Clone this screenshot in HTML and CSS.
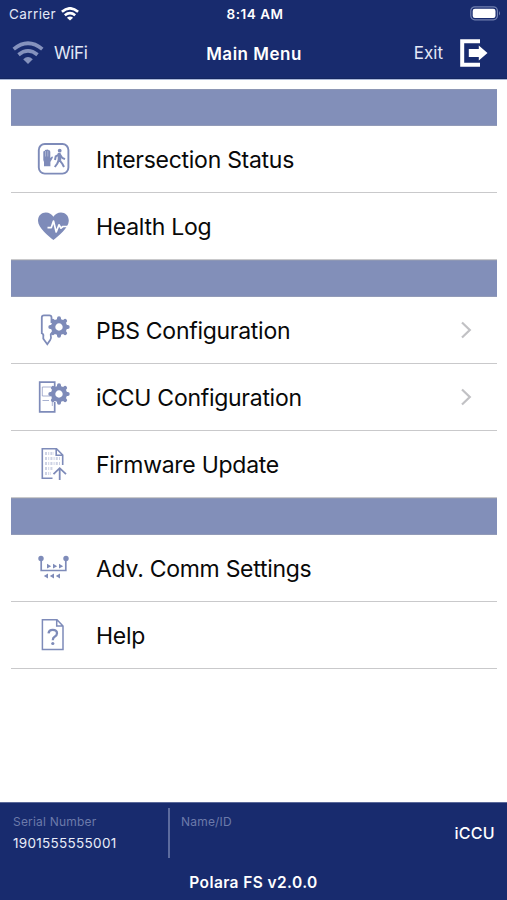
FILE: index.html
```html
<!DOCTYPE html>
<html lang="en">
<head>
<meta charset="utf-8">
<title>Main Menu</title>
<link rel="stylesheet" href="styles.css">
</head>
<body>
<svg class="defs" width="0" height="0">
  <symbol id="gear" viewBox="-11 -11 22 22">
    <circle r="5.9" fill="none" stroke="currentColor" stroke-width="4.4"/>
    <g stroke="currentColor" stroke-width="4" stroke-linecap="round">
      <path d="M0-7.5V-8.7M0 7.5V8.7M-7.5 0H-8.7M7.5 0H8.7M-5.3-5.3L-6.1-6.1M5.3-5.3L6.1-6.1M-5.3 5.3L-6.1 6.1M5.3 5.3L6.1 6.1"/>
    </g>
  </symbol>
</svg>
<div class="app">
  <header class="header">
    <div class="status">
      <div class="carrier"><span>Carrier</span>
        <svg width="18" height="14" viewBox="0 0 18 14" fill="none" stroke="#fff" stroke-width="2.6"><path d="M.9 4.8Q9-2.2 17.1 4.8M3.8 8.3Q9 4 14.2 8.3"/><path d="M9 13.6L5.9 10.7Q9 8.5 12.1 10.7Z" fill="#fff" stroke="none"/></svg>
      </div>
      <div class="time">8:14 AM</div>
      <svg class="battery" width="31" height="15" viewBox="0 0 31 15"><rect x=".8" y=".8" width="26.6" height="13" rx="4" fill="none" stroke="#7180b0" stroke-width="1.2"/><rect x="2.7" y="2.7" width="22.8" height="9.2" rx="2.2" fill="#fff"/><path d="M29 5Q31 7.3 29 9.6Z" fill="#7180b0"/></svg>
    </div>
    <nav class="nav">
      <div class="wifi">
        <svg width="32" height="24" viewBox="0 0 32 24" fill="none" stroke="#8592bd" stroke-width="3.7"><path d="M1.7 8.2Q16-3.7 30.3 8.2M6.5 13.7Q16 6 25.5 13.7"/><path d="M16 23L11.2 18.2Q16 14 20.8 18.2Z" fill="#8592bd" stroke="none"/></svg>
        <span>WiFi</span>
      </div>
      <h1 class="title">Main Menu</h1>
      <div class="exit"><span>Exit</span>
        <svg width="28" height="28" viewBox="0 0 28 28"><path d="M20 2.2H2.2V25.8H20" fill="none" stroke="#fff" stroke-width="4"/><path d="M8.8 10H18.8V6.5L27.5 14 18.8 21.5V18H8.8Z" fill="#fff"/></svg>
      </div>
    </nav>
  </header>
  <main class="menu">
    <div class="band"></div>
    <div class="row">
      <svg class="icon" viewBox="0 0 36 36"><rect x="3.8" y="3" width="29.6" height="29.6" rx="6" fill="none" stroke="currentColor" stroke-width="1.9"/><path d="M8.3 11.2Q8.3 9.6 9.6 10Q10 8.4 11.5 8.8Q13 8 13.8 9.3Q15.3 9 15.3 11V17L17 15.5Q18.3 15.5 17.8 16.8L15.4 21V25.3H9V21L8.3 19Z" fill="currentColor"/><path d="M10.5 10V15.5M12.8 10V15.5" stroke="#fff" stroke-width=".35"/><circle cx="24.7" cy="9.7" r="1.9" fill="currentColor"/><path d="M24.2 13V19L27.3 22.7L29 26M23.8 19L22.3 22.5L19.8 26M24 13.5L20.7 15.5L20 19M25 13.5L27.3 17L30 18.2" fill="none" stroke="currentColor" stroke-width="2"/><path d="M22.7 12H25.6L26.3 19.5H22.7Z" fill="currentColor"/></svg>
      <span class="label">Intersection Status</span>
    </div>
    <div class="row">
      <svg class="icon" viewBox="0 0 36 36"><path d="M18.4 32C14 28.5 3 20 3 12.8C3 7.7 6.6 4.6 10.8 4.6C14.2 4.6 16.7 6.2 18.4 8.8C20.1 6.2 22.6 4.6 26 4.6C30.2 4.6 33.8 7.7 33.8 12.8C33.8 20 22.8 28.5 18.4 32Z" fill="currentColor"/><path d="M12.5 19.6H16.3L18.5 13L21.2 24L24 16.8L26 20.2L28 18.5H33.5" fill="none" stroke="#fff" stroke-width="1.7" stroke-linejoin="round"/></svg>
      <span class="label">Health Log</span>
    </div>
    <div class="band"></div>
    <div class="row">
      <svg class="icon" viewBox="0 0 36 36"><path d="M16.5 11V5.5Q16.5 3.3 14.3 3.3H9Q6.8 3.3 6.8 5.5V21.3Q8.8 22.2 8.3 24.2Q7.8 26.5 9.2 28L12.3 32.3L15.2 28Q16.6 26.3 15.8 24Q15.2 22.3 16.8 21" fill="none" stroke="currentColor" stroke-width="1.8"/><use href="#gear" x="13" y="4" width="22" height="22"/></svg>
      <span class="label">PBS Configuration</span>
      <svg class="chevron" viewBox="0 0 12 18"><path d="M2 1.5L9.8 9L2 16.5"/></svg>
    </div>
    <div class="row">
      <svg class="icon" viewBox="0 0 36 36"><g fill="none" stroke="currentColor"><path d="M19.7 9V3.2H4.7V32.8H19.7V23" stroke-width="1.7"/><path d="M16 8H7.3V17H16M7.5 21.5H14M17.3 18V27" stroke-width=".9" opacity=".75"/></g><use href="#gear" x="13" y="4" width="22" height="22"/></svg>
      <span class="label">iCCU Configuration</span>
      <svg class="chevron" viewBox="0 0 12 18"><path d="M2 1.5L9.8 9L2 16.5"/></svg>
    </div>
    <div class="row">
      <svg class="icon" viewBox="0 0 36 36"><g fill="none" stroke="currentColor"><path d="M17.5 32.2H7.3V2.7H21.5L27.7 9V19M21.2 3V9.3H27.5" stroke-width="1.6"/><path d="M10 7.5H19M10 12.5H25M10 17.5H25M10 22.5H18M10 27.5H16" stroke-width="3" stroke-dasharray="2 1.2 1 1.2" opacity=".38"/><path d="M24.7 34V22.5M18.5 28.2L24.7 22.2L31 28.2" stroke-width="1.8"/></g></svg>
      <span class="label">Firmware Update</span>
    </div>
    <div class="band"></div>
    <div class="row">
      <svg class="icon" viewBox="0 0 36 36"><path d="M6.2 8V20.5H30.8V8" fill="none" stroke="currentColor" stroke-width="1.7"/><g fill="currentColor"><circle cx="6" cy="8.5" r="2.7"/><circle cx="31" cy="8.5" r="2.7"/><path d="M12 13.8L16.2 16.2L12 18.6ZM18 13.8L22.2 16.2L18 18.6ZM24 13.8L28.2 16.2L24 18.6ZM13 23.6L8.8 26L13 28.4ZM19 23.6L14.8 26L19 28.4ZM25 23.6L20.8 26L25 28.4Z"/></g></svg>
      <span class="label">Adv. Comm Settings</span>
    </div>
    <div class="row">
      <svg class="icon" viewBox="0 0 36 36"><g fill="none" stroke="currentColor"><path d="M7.4 2.7H22L28 9V32.5H7.4ZM21.7 3V9H27.7" stroke-width="1.5"/><path d="M13.5 16.3Q14 12.9 17.7 12.9Q22 12.9 22 16.3Q22 18.5 19.6 19.8Q17.8 20.8 17.8 23.3" stroke-width="2.3"/></g><circle cx="17.8" cy="26.5" r="1.6" fill="currentColor"/></svg>
      <span class="label">Help</span>
    </div>
  </main>
  <footer class="footer">
    <div class="info">
      <div class="serial"><div class="caption">Serial Number</div><div class="number">1901555555001</div></div>
      <div class="name"><div class="caption">Name/ID</div></div>
      <div class="device">iCCU</div>
    </div>
    <div class="version">Polara FS v2.0.0</div>
  </footer>
</div>
</body>
</html>
```
FILE: styles.css
```css
* { box-sizing: border-box; }
body { margin: 0; background: #fff; font-family: Inter, "Liberation Sans", sans-serif; }
.defs { display: block; }
.app { display: flex; flex-direction: column; width: 507px; height: 900px; overflow: hidden; }
svg { flex: none; }

.header { height: 79px; background: #182b6e; border-bottom: 1px solid #14265f; box-shadow: 0 1px 0 #a9b7d8; color: #fff; }
.status { display: grid; grid-template-columns: 1fr auto 1fr; align-items: center; height: 27px; padding: 0 6px 0 9px; }
.carrier { display: flex; align-items: center; gap: 5px; font-size: 13.5px; letter-spacing: .4px; color: #e3e8f6; }
.time { font-size: 13.5px; font-weight: 600; letter-spacing: .5px; }
.battery { justify-self: end; }
.nav { display: grid; grid-template-columns: 1fr auto 1fr; align-items: center; height: 51px; padding: 0 19px 0 12px; }
.wifi { display: flex; align-items: center; gap: 10px; font-size: 17px; letter-spacing: -.4px; color: #e3e8f6; }
.title { margin: 2px -4px 0 4px; font: 600 17px/24px Inter, sans-serif; letter-spacing: .5px; }
.exit { display: flex; align-items: center; justify-content: flex-end; gap: 17px; font-size: 17px; color: #e3e8f6; }

.menu { flex: 1; padding: 10px 10px 0 11px; }
.band { height: 37px; background: #828fb9; border-top: 1px solid #8d97b5; border-bottom: 1px solid #929bb8; }
.row { display: flex; align-items: center; height: 67px; padding: 0 25px 0 24px; border-bottom: 1px solid #c9c9cb; color: #7e8bb9; }
.icon { width: 36px; height: 36px; }
.label { margin: 2px 0 0 25px; font-size: 23px; line-height: 30px; letter-spacing: -.28px; color: #090909; white-space: nowrap; }
.chevron { width: 12px; height: 18px; margin-left: auto; fill: none; stroke: #c1c1c4; stroke-width: 2.2; }

.footer { height: 98px; background: #182b6e; border-top: 1px solid #5b699a; color: #fff; }
.info { display: flex; height: 61px; padding: 5px 12px 0 13px; }
.serial { width: 157px; height: 50px; padding-top: 6px; border-right: 2px solid #5c6b9e; }
.name { flex: 1; padding: 6px 0 0 11px; }
.caption { font-size: 12px; line-height: 16px; letter-spacing: .2px; color: #6c7aaa; }
.number { margin-top: 5px; font-size: 13.5px; line-height: 17px; letter-spacing: .3px; color: #e9edf9; }
.device { margin-top: 15px; font-size: 16px; line-height: 20px; font-weight: 500; letter-spacing: .3px; }
.version { margin-top: 9px; text-align: center; font-size: 15.5px; line-height: 20px; font-weight: 600; letter-spacing: .4px; }
```
